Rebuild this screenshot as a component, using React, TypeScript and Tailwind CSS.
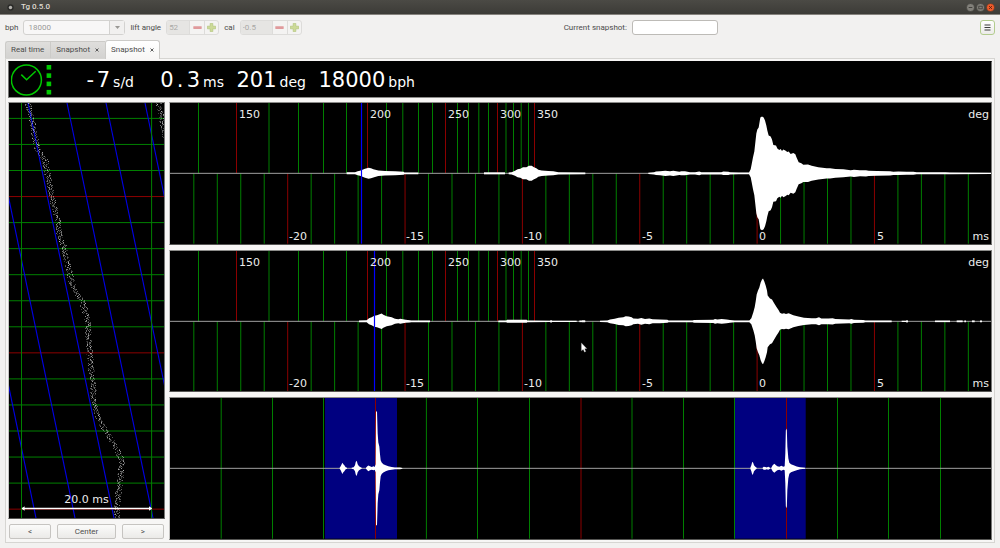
import React from 'react';

type Sample = [number, number];
type Burst = { at: number; samples: Sample[] };
type Rule = { x: number; major?: boolean };
type Label = { x: number; text: string };

const W = 821;
const H = 141;
const MID = 70.5;
const GREEN = '#008000';
const RED = '#8c0000';

/* Closed symmetric outline of a burst; samples are [thirds of a unit, half height]. */
function outline({ at, samples }: Burst): string {
  const top = samples.map(([t, h]) => `${(at + t / 3).toFixed(2)},${(MID - h).toFixed(2)}`);
  const bottom = samples.map(([t, h]) => `${(at + t / 3).toFixed(2)},${(MID + h).toFixed(2)}`).reverse();
  return [...top, ...bottom].join(' ');
}

const degreeRules: Rule[] = [
  { x: 28.5 }, { x: 66.5, major: true }, { x: 99 }, { x: 128.5 }, { x: 153.5 }, { x: 176.5 },
  { x: 197.5, major: true }, { x: 216.5 }, { x: 232.8 }, { x: 248.5 }, { x: 262.5 },
  { x: 275.5, major: true }, { x: 287.5 }, { x: 298.5 }, { x: 308.8 }, { x: 318.5 },
  { x: 327.5, major: true }, { x: 336 }, { x: 343.5 }, { x: 351.2 }, { x: 358.5 },
  { x: 364.5, major: true },
];

const millisecondRules: Rule[] = Array.from({ length: 34 }, (_, i) => {
  const ms = i - 24;
  return { x: 587.1 + ms * 23.47, major: ms % 5 === 0 };
});

const degreeLabels: Label[] = [
  { x: 69, text: '150' }, { x: 200, text: '200' }, { x: 278, text: '250' },
  { x: 330, text: '300' }, { x: 367, text: '350' },
];

const millisecondLabels: Label[] = [
  { x: 119, text: '-20' }, { x: 236, text: '-15' }, { x: 354, text: '-10' },
  { x: 472, text: '-5' }, { x: 589, text: '0' }, { x: 707, text: '5' },
];

const ticBursts: Burst[] = [
  { at: -5, samples: [[545, 1], [570, 1], [578, 2], [585, 2.5], [600, 4.5], [611, 5.5], [618, 5], [625, 4.2], [640, 2.8], [660, 2.3], [690, 2], [716, 1.5], [718, 0.9], [760, 0.9]] },
  { at: -5, samples: [[957, 1], [1020, 1]] },
  { at: -5, samples: [[1031, 0.8], [1040, 1.2], [1050, 2.5], [1058, 4], [1066, 4.5], [1074, 6], [1084, 6], [1092, 7.5], [1100, 7.5], [1107, 6], [1114, 5], [1120, 3.5], [1130, 2.8], [1150, 2.3], [1165, 2], [1180, 1.1], [1261, 0.9]] },
  {
    at: 410,
    samples: [[205, 0.7], [222, 1.2], [228, 1.8], [240, 2], [256, 2.6], [270, 2.2], [280, 2.6], [298, 1.6], [304, 2], [315, 2], [330, 1.2], [345, 1.2], [358, 1.9], [364, 1.2], [400, 1.2], [424, 1.2], [430, 1.8], [445, 1.7], [450, 1.1], [475, 0.9], [507, 0.8],
      [512, 4], [515, 9], [519, 16], [523, 22], [526, 31], [529, 40], [532, 44], [536, 46], [539, 52], [541, 56], [546, 57], [551, 56], [555, 53], [559, 48], [562, 43], [566, 38], [572, 37], [576, 34], [580, 28.5], [588, 28], [592, 25], [598, 23.5], [602, 24.5], [606, 22.5], [610, 24], [616, 23], [622, 21.5], [626, 22], [632, 19.5], [640, 20.5], [646, 19], [650, 15.5], [656, 11], [664, 10], [670, 8.6], [684, 8.8], [695, 7.5], [715, 6.2], [740, 5.2], [750, 5.2], [766, 4.4], [790, 4], [812, 3.2], [822, 3.6], [840, 3], [858, 3.2], [866, 2.6], [890, 2.4], [930, 2.2], [940, 1.6], [955, 1.8], [980, 1.5], [1000, 1.5], [1010, 1], [1096, 1], [1110, 0.8], [1233, 0.7]],
  },
];

const tocBursts: Burst[] = [
  { at: -5, samples: [[582, 0.9], [605, 1], [612, 3], [620, 4], [628, 5.5], [636, 6], [644, 7], [650, 7.8], [655, 6.5], [665, 5], [680, 4], [690, 2.5], [700, 2], [706, 2.5], [722, 1.5], [735, 1.2], [738, 0.9], [795, 0.9]] },
  { at: -5, samples: [[1000, 0.8], [1024, 0.8], [1026, 1.5], [1085, 1.5], [1087, 0.8], [1155, 0.7], [1158, 1.3], [1162, 0.7], [1235, 0.7]] },
  { at: -5, samples: [[1243, 0.8], [1261, 0.8]] },
  { at: 410, samples: [[6, 0.8], [15, 0.8]] },
  {
    at: 410,
    samples: [[60, 0.7], [82, 0.9], [90, 1.8], [104, 2.6], [116, 3.6], [130, 4], [137, 5], [146, 4.8], [155, 4], [160, 2.8], [174, 2.5], [184, 3.4], [195, 2.3], [208, 2.8], [218, 2], [240, 1.8], [262, 1.5], [266, 0.8], [338, 0.8], [342, 1.4], [400, 1.6], [405, 2.4], [412, 1.8], [425, 2.4], [440, 1.9], [450, 1.4], [464, 0.8], [508, 0.8],
      [514, 3], [520, 9], [524, 14], [527, 20], [530, 27], [534, 31], [538, 34], [542, 39], [546, 42], [549, 43], [553, 40], [557, 36], [561, 31], [563, 26], [570, 23], [576, 22], [582, 18.5], [590, 14], [596, 11], [600, 8.5], [606, 7.7], [612, 8], [618, 7.4], [626, 8], [640, 6], [655, 4.8], [672, 3.7], [695, 3], [708, 3], [717, 4], [724, 2.8], [745, 2.8], [758, 3.2], [766, 2.4], [808, 1.8], [814, 2.3], [822, 1.6], [850, 1.3], [856, 0.9], [935, 0.8]],
  },
  { at: 410, samples: [[965, 0.6], [978, 0.6], [981, 1.4], [984, 0.6]] },
  { at: 410, samples: [[1065, 0.8], [1110, 0.8]] },
  { at: 410, samples: [[1130, 0.9], [1148, 0.9]] },
  { at: 410, samples: [[1153, 0.9], [1158, 0.9]] },
  { at: 410, samples: [[1176, 0.9], [1184, 0.9]] },
  { at: 410, samples: [[1200, 0.8], [1206, 0.8]] },
];

const periodBursts: Burst[] = [
  { at: -5, samples: [[524, 0.5], [527, 2], [530, 4.2], [532, 5.6], [535, 4], [538, 3], [542, 1], [546, 0.5]] },
  { at: -5, samples: [[560, 0.5], [566, 1], [570, 3], [572, 6], [574, 7.6], [576, 6.5], [578, 4], [582, 2], [587, 1], [590, 0.5]] },
  { at: -5, samples: [[603, 0.5], [607, 2], [610, 2.8], [615, 2], [620, 1.3], [626, 2], [629, 1.3], [632, 4], [633, 57], [636, 57], [638, 35], [640, 26], [643, 22], [645, 14], [647, 8], [650, 5.8], [655, 4.2], [662, 3], [670, 2], [680, 1.3], [690, 0.8], [705, 0.8], [712, 0.3]] },
  { at: 410, samples: [[511, 0.5], [514, 3], [516, 5.5], [518, 6.6], [520, 5], [522, 3], [526, 1.5], [530, 0.5]] },
  { at: 410, samples: [[548, 0.5], [551, 1.5], [556, 1.4], [560, 0.8], [565, 1.5], [570, 0.5]] },
  { at: 410, samples: [[574, 0.5], [578, 3], [583, 4.5], [588, 3], [592, 2], [598, 1.5], [604, 2.5], [610, 1.5], [614, 2], [616, 15], [617.5, 38], [619, 40], [620.5, 38], [622, 22], [625, 10], [628, 5.5], [633, 4], [641, 3], [650, 1.8], [660, 1], [675, 0.5]] },
];

const periodRules: Rule[] = [
  { x: 51.2 }, { x: 102.5 }, { x: 153.5 }, { x: 205.5, major: true }, { x: 256.4 }, { x: 307.5 },
  { x: 359.5 }, { x: 411, major: true }, { x: 462 }, { x: 513.5 }, { x: 564.5 },
  { x: 616.5, major: true }, { x: 667.5 }, { x: 718.5 }, { x: 770.5 },
];

function Rules({ rules, from, to }: { rules: Rule[]; from: number; to: number }) {
  return (
    <>
      {rules.map((r) => (
        <line key={r.x} x1={r.x} x2={r.x} y1={from} y2={to} stroke={r.major ? RED : GREEN} strokeWidth={1} />
      ))}
    </>
  );
}

function Baseline() {
  return <line x1={0} x2={W} y1={MID} y2={MID} stroke="#a0a0a0" strokeWidth={1} shapeRendering="crispEdges" />;
}

function Bursts({ bursts }: { bursts: Burst[] }) {
  return (
    <>
      {bursts.map((b, i) => (
        <polygon key={i} points={outline(b)} fill="#fff" />
      ))}
    </>
  );
}

const frame = 'relative min-h-24 border border-t-[#8b8b89] border-r-[#777775] border-b-[#555553] border-l-[#c4c3c1] bg-black';

function ChartLabel({ label, bottom }: { label: Label; bottom?: boolean }) {
  return (
    <span
      className={`absolute text-[11px] leading-3 text-[#ececec] ${bottom ? 'bottom-px' : 'top-[6px]'}`}
      style={{ left: `${(label.x / W) * 100}%` }}
    >
      {label.text}
    </span>
  );
}

function BeatChart({ name, bursts, cursor, pointer }: { name: string; bursts: Burst[]; cursor: number; pointer?: boolean }) {
  return (
    <section aria-label={name} className={frame}>
      <svg className="absolute inset-0 h-full w-full" viewBox={`0 0 ${W} ${H}`} preserveAspectRatio="none" aria-hidden="true">
        <Rules rules={degreeRules} from={0} to={MID} />
        <Rules rules={millisecondRules} from={MID} to={H} />
        <Baseline />
        <Bursts bursts={bursts} />
        <line x1={cursor} x2={cursor} y1={0} y2={H} stroke="#0000ff" strokeWidth={1.2} />
        {pointer && (
          <path d="M411.3 92 L411.3 100.3 L413.2 98.7 L414.5 101.4 L415.9 100.7 L414.7 98.1 L417 97.9 Z" fill="#fff" stroke="#555" strokeWidth={0.3} />
        )}
      </svg>
      {degreeLabels.map((l) => <ChartLabel key={l.text} label={l} />)}
      {millisecondLabels.map((l) => <ChartLabel key={l.text} label={l} bottom />)}
      <span className="absolute right-[2px] top-[6px] text-[11px] leading-3 text-[#ececec]">deg</span>
      <span className="absolute bottom-px right-[2px] text-[11px] leading-3 text-[#ececec]">ms</span>
    </section>
  );
}

function PeriodChart() {
  return (
    <section aria-label="Period" className={frame}>
      <svg className="absolute inset-0 h-full w-full" viewBox={`0 0 ${W} ${H}`} preserveAspectRatio="none" aria-hidden="true">
        <rect x={155} y={0} width={72} height={H} fill="#000080" />
        <rect x={565} y={0} width={70.7} height={H} fill="#000080" />
        <Rules rules={periodRules} from={0} to={H} />
        <Baseline />
        <Bursts bursts={periodBursts} />
      </svg>
    </section>
  );
}

const mainTrace: Sample[] = [
  [18.5, 0], [22, 14], [27.5, 45], [35.5, 57], [39.5, 78], [43, 94], [47.5, 113], [50, 129], [54, 142],
  [58, 160], [63, 182], [73, 198], [78, 215], [80, 247], [83, 277], [84.5, 302], [91, 319], [99, 332],
  [108, 347], [112, 357], [111, 377], [108, 397], [107.5, 415],
];
const wrappedTrace: Sample[] = [[149, 0], [152.5, 14], [156, 36]];

function scatter(trace: Sample[], seed: number) {
  let s = seed;
  const next = () => {
    s = (s * 1103515245 + 12345) % 2147483648;
    return s / 2147483648;
  };
  const dots: { x: number; y: number; o: number }[] = [];
  for (let i = 0; i < trace.length - 1; i++) {
    const [x0, y0] = trace[i];
    const [x1, y1] = trace[i + 1];
    for (let y = y0; y < y1; y++) {
      const cx = x0 + ((x1 - x0) * (y - y0)) / (y1 - y0);
      for (let n = 0; n < 3; n++) {
        dots.push({ x: Math.round(cx + (next() - 0.5) * 6), y, o: 0.12 + next() * 0.36 });
      }
    }
  }
  return dots;
}

const dots = [...scatter(mainTrace, 7), ...scatter(wrappedTrace, 31)];

function PaperStrip() {
  return (
    <section aria-label="Paper strip" className={`${frame} flex-1`}>
      <svg className="absolute inset-0 h-full w-full" viewBox="0 0 155 415" preserveAspectRatio="none" aria-hidden="true">
        {Array.from({ length: 16 }, (_, i) => (
          <line key={i} x1={0} x2={155} y1={15.4 + i * 26.05} y2={15.4 + i * 26.05} stroke={i % 6 === 3 ? RED : GREEN} strokeWidth={1} />
        ))}
        {[-89, -50, -11, 28, 67, 106, 145].map((x) => (
          <line key={x} x1={x - 9} x2={x - 9 + 86} y1={0} y2={415} stroke="#0000e6" strokeWidth={1.1} />
        ))}
        <line x1={12.5} x2={12.5} y1={0} y2={415} stroke={GREEN} />
        <line x1={142.6} x2={142.6} y1={0} y2={415} stroke={GREEN} />
        {dots.map((d, i) => (
          <rect key={i} x={d.x} y={d.y} width={1} height={1} fill="#fff" fillOpacity={d.o} />
        ))}
        <path d="M13 405.5H142.6" stroke="#fff" strokeWidth={1.4} />
        <path d="M12.6 405.5L15.6 403.2V407.8ZM143 405.5L140 403.2V407.8Z" fill="#fff" />
      </svg>
      <span className="absolute inset-x-0 bottom-3 text-center text-[11px] leading-3 text-[#ececec]">20.0 ms</span>
    </section>
  );
}

function Reading({ value, unit, width }: { value: string; unit: string; width: string }) {
  return (
    <div className={`flex items-baseline justify-end gap-[3px] ${width}`}>
      <span className="text-[21px] leading-6">
        {value.split('').map((c, i) =>
          c === '-' || c === '.' ? (
            <span key={i} className="inline-block w-[13px] text-center">{c}</span>
          ) : (
            <React.Fragment key={i}>{c}</React.Fragment>
          ),
        )}
      </span>
      <span className="text-[14px] leading-6">{unit}</span>
    </div>
  );
}

function Readout() {
  return (
    <header className="flex h-[37px] items-center border border-x-[#777775] border-b-[#8b8b89] border-t-black bg-black pl-[2px] text-white">
      <svg className="h-[34px] w-[46px] shrink-0" viewBox="0 0 46 34" aria-hidden="true">
        <circle cx={15.4} cy={17} r={15} fill="none" stroke="#00c800" strokeWidth={1.5} />
        <path d="M10.3 11.6L15.6 16.8L24.7 8.2" fill="none" stroke="#00c800" strokeWidth={1.5} />
        {[2, 10.3, 18.6, 26.9].map((y) => (
          <rect key={y} x={35.6} y={y} width={4.6} height={4.6} fill="#00c800" />
        ))}
      </svg>
      <div className="flex items-baseline gap-3 pt-[2px]">
        <Reading value="-7" unit="s/d" width="min-w-[77px]" />
        <Reading value="0.3" unit="ms" width="min-w-[78px]" />
        <Reading value="201" unit="deg" width="min-w-[70px]" />
        <Reading value="18000" unit="bph" width="min-w-[97px]" />
      </div>
    </header>
  );
}

function SpinBox({ id, label, value, width }: { id: string; label: string; value: string; width: string }) {
  return (
    <div className="flex items-center gap-[5px]">
      <label htmlFor={id}>{label}</label>
      <div className="flex h-[15px] overflow-hidden rounded-[3px] border border-[#dddcda] bg-[#f4f3f2]">
        <input id={id} defaultValue={value} disabled className={`${width} bg-[#e6e5e3] px-[2px] text-[#a9a8a5]`} />
        <button type="button" disabled aria-label={`Decrease ${label}`} className="flex w-[15px] items-center justify-center border-l border-[#dddcda]">
          <svg className="h-[9px] w-[9px]" viewBox="0 0 9 9" aria-hidden="true">
            <rect x={0.3} y={3.2} width={8.4} height={2.8} rx={0.4} fill="#e09a9c" />
          </svg>
        </button>
        <button type="button" disabled aria-label={`Increase ${label}`} className="flex w-[14px] items-center justify-center border-l border-[#dddcda]">
          <svg className="h-[9px] w-[9px]" viewBox="0 0 9 9" aria-hidden="true">
            <path d="M3.2 0.4H5.8V3.2H8.6V5.8H5.8V8.6H3.2V5.8H0.4V3.2H3.2Z" fill="#cdda98" stroke="#b3c57c" strokeWidth={0.7} />
          </svg>
        </button>
      </div>
    </div>
  );
}

function Toolbar() {
  return (
    <div className="flex items-center gap-[5px] px-[5px] pb-[5px] pt-[5px]">
      <div className="flex items-center gap-[5px]">
        <label htmlFor="bph">bph</label>
        <div className="relative flex h-[15px] w-[102px] rounded-[3px] border border-[#d3d2d0] bg-[#f8f7f7]">
          <select id="bph" disabled defaultValue="18000" className="w-full appearance-none bg-transparent pl-1 text-[#9b9a97] opacity-100">
            <option value="18000">18000</option>
          </select>
          <span className="pointer-events-none absolute inset-y-0 right-0 flex w-[15px] items-center justify-center border-l border-[#d3d2d0] bg-[#f1f0ef]">
            <svg className="h-[3px] w-[5px]" viewBox="0 0 5 3" aria-hidden="true">
              <path d="M0 0H5L2.5 3Z" fill="#999894" />
            </svg>
          </span>
        </div>
      </div>
      <SpinBox id="lift" label="lift angle" value="52" width="w-[22px]" />
      <SpinBox id="cal" label="cal" value="-0.5" width="w-[31px]" />
      <div className="flex flex-1 items-center justify-center gap-[5px]">
        <label htmlFor="snapshot-name">Current snapshot:</label>
        <input id="snapshot-name" className="h-[15px] w-[86px] rounded-[3px] border border-[#bdbbb7] bg-white px-[3px]" />
      </div>
      <button type="button" aria-label="Menu" className="flex h-[15px] w-[15px] items-center justify-center rounded-[3px] border border-[#b3cc8e] bg-linear-to-b from-white to-[#ecebe9]">
        <svg className="h-[7px] w-[7px]" viewBox="0 0 7 7" aria-hidden="true">
          <path d="M0.5 1H6.5M0.5 3.5H6.5M0.5 6H6.5" stroke="#3c3c3c" strokeWidth={1.1} />
        </svg>
      </button>
    </div>
  );
}

function Tab({ label, active, closable }: { label: string; active?: boolean; closable?: boolean }) {
  return (
    <div
      role="tab"
      aria-selected={!!active}
      className={
        active
          ? 'relative z-10 -mb-px flex h-[19px] items-center gap-[5px] rounded-t-[3px] border border-b-0 border-[#cccbc8] bg-linear-to-b from-white to-[#f7f6f5] px-[5px]'
          : 'mt-px flex h-[17px] items-center gap-[5px] border border-b-0 border-r-0 border-[#cccbc8] bg-linear-to-b from-[#dfdedc] to-[#d3d2d0] pl-[5px] pr-[6px] first:rounded-tl-[3px]'
      }
    >
      <span>{label}</span>
      {closable && (
        <button type="button" aria-label={`Close ${label}`} className="flex items-center">
          <svg className="h-1 w-1" viewBox="0 0 4 4" aria-hidden="true">
            <path d="M0.5 0.5L3.5 3.5M3.5 0.5L0.5 3.5" stroke="#4c4c4c" strokeWidth={0.9} />
          </svg>
        </button>
      )}
    </div>
  );
}

function TitleBar() {
  return (
    <div className="flex h-[15px] items-center border-b border-[#85827d] bg-linear-to-b from-[#4b4a45] to-[#3c3b37] pl-[7px] pr-[5px] text-[#dfdbd2]">
      <svg className="h-[7px] w-[7px]" viewBox="0 0 7 7" aria-hidden="true">
        <circle cx={3.5} cy={3.5} r={3.2} fill="#2b2b29" />
        <circle cx={3.5} cy={3.5} r={1.7} fill="#b5b3ae" />
      </svg>
      <h1 className="ml-[7px] flex-1 font-medium">Tg 0.5.0</h1>
      <div className="flex gap-px">
        <button type="button" aria-label="Minimize">
          <svg className="h-[9px] w-[9px]" viewBox="0 0 9 9" aria-hidden="true">
            <circle cx={4.5} cy={4.5} r={4} fill="#82807a" stroke="#33322f" strokeWidth={0.5} />
            <path d="M2.7 4.5H6.3" stroke="#3c3b37" strokeWidth={0.9} />
          </svg>
        </button>
        <button type="button" aria-label="Maximize">
          <svg className="h-[9px] w-[9px]" viewBox="0 0 9 9" aria-hidden="true">
            <circle cx={4.5} cy={4.5} r={4} fill="#82807a" stroke="#33322f" strokeWidth={0.5} />
            <rect x={2.8} y={3.2} width={3.4} height={2.6} fill="none" stroke="#3c3b37" strokeWidth={0.8} />
          </svg>
        </button>
        <button type="button" aria-label="Close">
          <svg className="h-[9px] w-[9px]" viewBox="0 0 9 9" aria-hidden="true">
            <circle cx={4.5} cy={4.5} r={4} fill="#ef5a29" stroke="#33322f" strokeWidth={0.5} />
            <path d="M3.1 3.1L5.9 5.9M5.9 3.1L3.1 5.9" stroke="#4a2315" strokeWidth={0.9} />
          </svg>
        </button>
      </div>
    </div>
  );
}

const pushButton = 'h-[15px] rounded-[2px] border border-[#c6c4c1] bg-linear-to-b from-[#fbfbfa] to-[#ebeae8] text-center leading-[13px]';

export default function App() {
  return (
    <div className="flex min-h-screen flex-col bg-[#f2f1f0] font-[Roboto,sans-serif] text-[8px] leading-[10px] text-[#4c4c4c]">
      <TitleBar />
      <Toolbar />
      <div role="tablist" className="flex items-end px-[5px]">
        <Tab label="Real time" />
        <Tab label="Snapshot" closable />
        <Tab label="Snapshot" closable active />
      </div>
      <main className="mx-[5px] mb-[5px] flex flex-1 flex-col gap-1 border border-[#d6d5d2] bg-[#f7f6f5] p-[2px] font-['DejaVu_Sans',sans-serif]">
        <Readout />
        <div className="flex flex-1 gap-1">
          <div className="flex w-[157px] shrink-0 flex-col gap-[5px]">
            <PaperStrip />
            <div className="grid grid-cols-[42fr_58fr_42fr] gap-[6px] px-px pb-px font-[Roboto,sans-serif]">
              <button type="button" className={pushButton}>&lt;</button>
              <button type="button" className={pushButton}>Center</button>
              <button type="button" className={pushButton}>&gt;</button>
            </div>
          </div>
          <div className="grid min-w-0 flex-1 grid-rows-3 gap-[5px]">
            <BeatChart name="Tic" bursts={ticBursts} cursor={191.5} />
            <BeatChart name="Toc" bursts={tocBursts} cursor={204.5} pointer />
            <PeriodChart />
          </div>
        </div>
      </main>
    </div>
  );
}
